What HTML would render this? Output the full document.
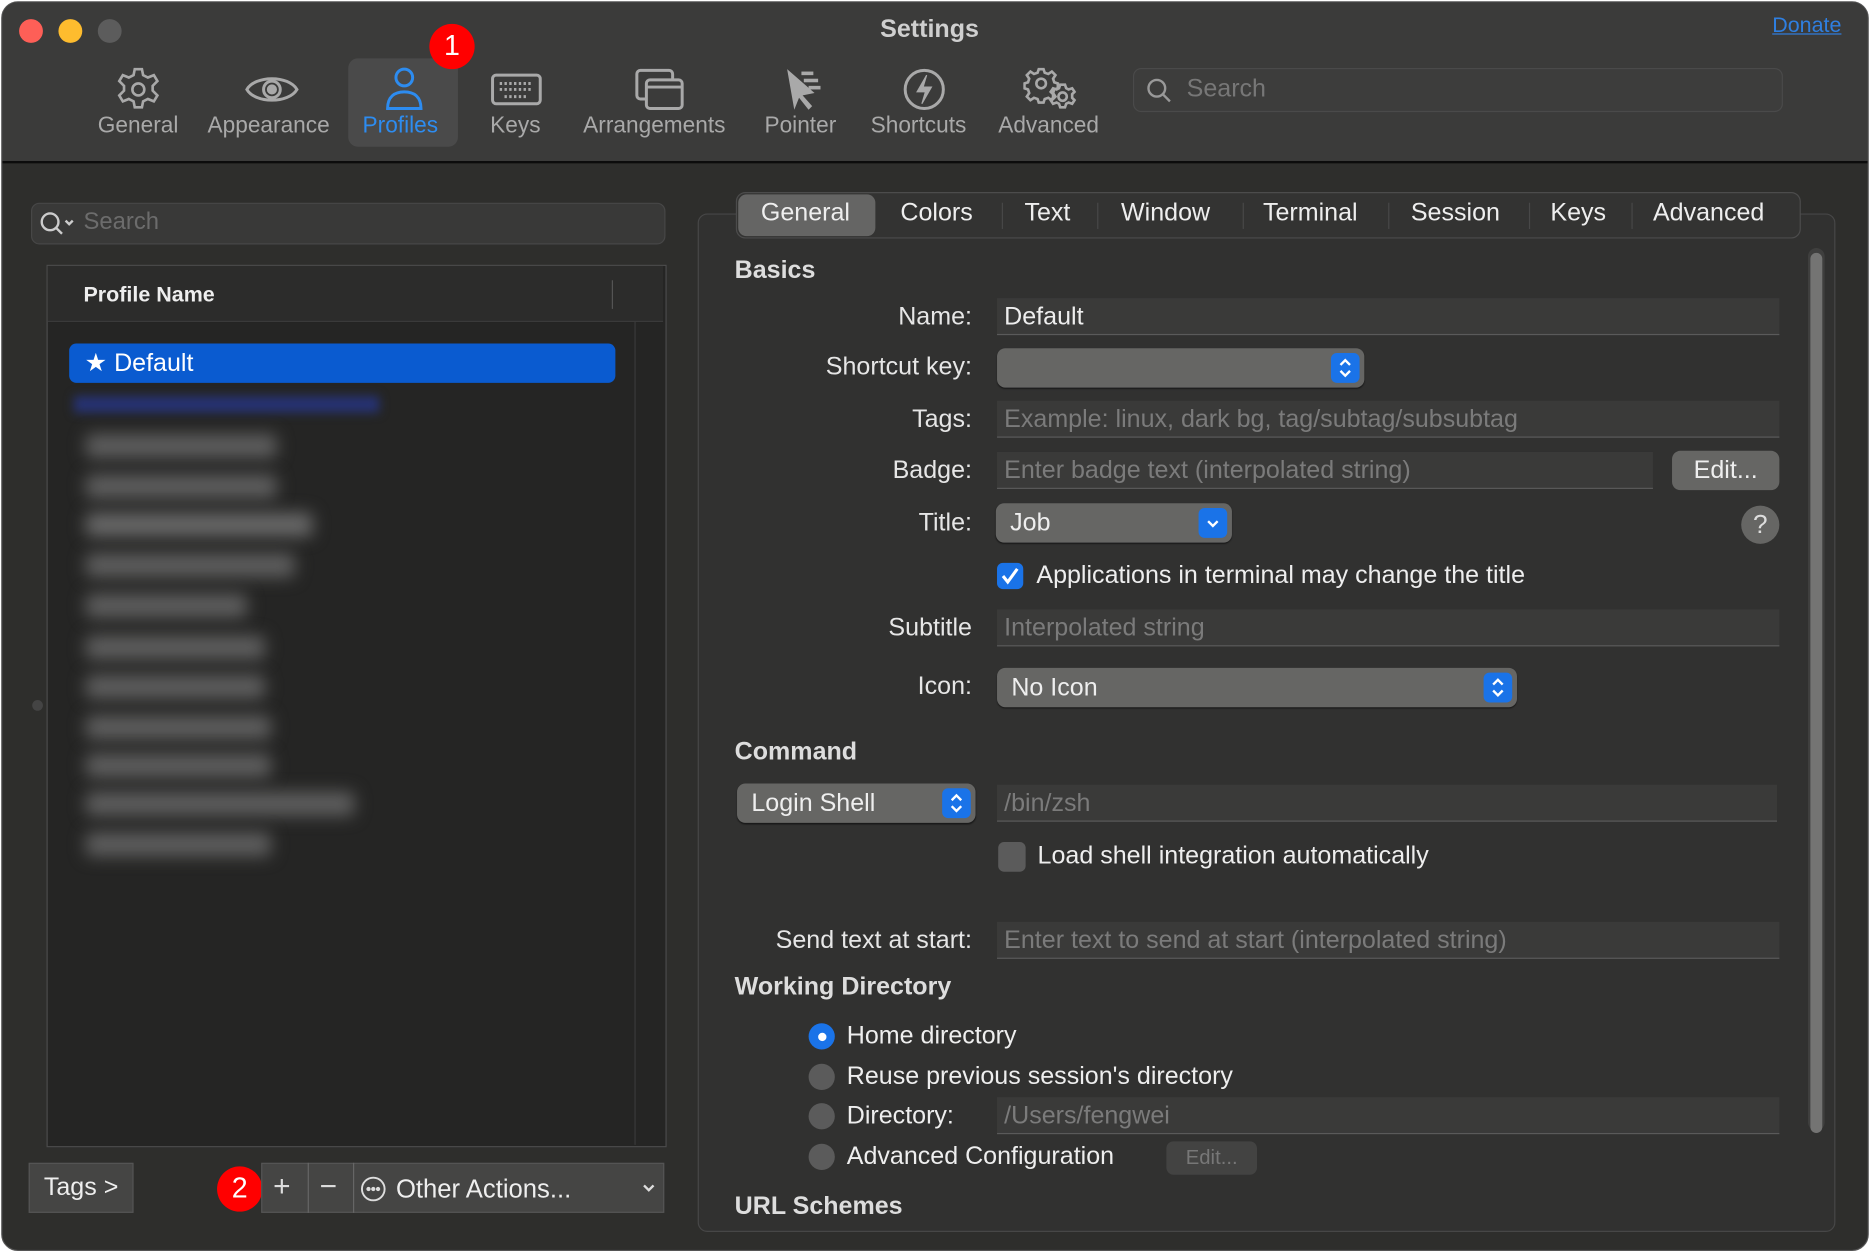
<!DOCTYPE html>
<html><head><meta charset="utf-8"><style>
html,body{margin:0;padding:0;background:#fff;width:1870px;height:1252px;overflow:hidden}
#s{position:absolute;left:0;top:0;width:1568px;height:1050px;transform:scale(1.19260);transform-origin:0 0;font-family:"Liberation Sans",sans-serif;color:#e6e6e6}
.a{position:absolute}
.win{left:1px;top:1px;width:1564px;height:1046px;border-radius:14px;background:#2e2e2c;overflow:hidden;border:1px solid #555}
.tb{left:0;top:0;width:1564px;height:133px;background:#3b3b3a;border-bottom:2px solid #0c0c0c}
.tl{width:20px;height:20px;border-radius:50%;top:14px}
.ti{top:93px;font-size:19px;color:#a9a9a9;text-align:center}
.ic{top:53px}
.lbl{font-size:21px;text-align:right;width:300px;left:513px}
.fld{background:#3a3a39;border-bottom:1px solid #5a5a5a;height:31px;font-size:21px;line-height:32px;padding-left:6px;box-sizing:border-box;color:#7b7b7b}
.pop{background:#666664;border-radius:7px;height:33px;box-shadow:0 1px 1px #1a1a1a;font-size:21px;line-height:33px;padding-left:12px;box-sizing:border-box;color:#eee}
.step{position:absolute;right:4px;top:4px;width:24px;height:25px;background:#1a73e8;border-radius:5px}
.step svg{position:absolute;left:0;top:0}
.h{font-size:21px;font-weight:bold;color:#ddd}
.rad{width:22px;height:22px;border-radius:50%;background:#5b5b5b}
.tab{top:165px;font-size:21px;color:#eee}
.sep{position:absolute;top:168px;width:1px;height:22px;background:#484848}
.blur{position:absolute;background:#5e5e5e;height:20px;filter:blur(7px);border-radius:4px}
.t{font-size:21px;color:#eee}
</style></head><body><div id="s">
<div class="a win">
 <div class="a tb"></div>
 <div class="a tl" style="left:14px;background:#fe5f57"></div>
 <div class="a tl" style="left:47px;background:#febc2e"></div>
 <div class="a tl" style="left:80px;background:#5c5c5c"></div>
 <div class="a" style="left:736px;top:11px;font-size:21px;font-weight:bold;color:#cfcfcf">Settings</div>
 <div class="a" style="left:1484px;top:9px;font-size:18px;color:#2f7fe0;text-decoration:underline">Donate</div>
 <div class="a" style="left:290px;top:47px;width:92px;height:74px;background:#4a4a4a;border-radius:8px"></div>
 <svg class="a ic" style="left:94px" width="40" height="40" viewBox="0 0 40 40" fill="none" stroke="#a9a9a9" stroke-width="2.2"><path d="M17 3h6l1 5 4 2 5-2 3 5-4 4v4l4 4-3 5-5-2-4 2-1 5h-6l-1-5-4-2-5 2-3-5 4-4v-4l-4-4 3-5 5 2 4-2z"/><circle cx="20" cy="20" r="5"/></svg>
 <svg class="a ic" style="left:202px" width="48" height="40" viewBox="0 0 48 40" fill="none" stroke="#a9a9a9" stroke-width="2.5"><path d="M3 20C10 8 38 8 45 20C38 32 10 32 3 20z"/><circle cx="24" cy="20" r="7"/><circle cx="24" cy="20" r="3" fill="#a9a9a9"/></svg>
 <svg class="a ic" style="left:317px" width="40" height="40" viewBox="0 0 40 40" fill="none" stroke="#2d8cf0" stroke-width="2.5"><circle cx="20" cy="10" r="7"/><path d="M6 36c0-10 6-14 14-14s14 4 14 14z"/></svg>
 <svg class="a ic" style="left:409px" width="44" height="40" viewBox="0 0 44 40" fill="none" stroke="#a9a9a9" stroke-width="2.5"><rect x="2" y="8" width="40" height="24" rx="3"/><path d="M8 15h28M8 20h28M12 26h20" stroke-dasharray="2 2"/></svg>
 <svg class="a ic" style="left:530px" width="44" height="40" viewBox="0 0 44 40" fill="none" stroke="#a9a9a9" stroke-width="2.5"><rect x="2" y="4" width="30" height="24" rx="3"/><rect x="10" y="12" width="30" height="24" rx="3" fill="#3b3b3a"/><path d="M10 18h30"/></svg>
 <svg class="a ic" style="left:652px" width="40" height="40" viewBox="0 0 40 40" fill="#a9a9a9"><path d="M6 3l6 34 4-10 8 10 3-3-8-9 10-2z"/><rect x="18" y="5" width="10" height="3"/><rect x="20" y="11" width="12" height="3"/><rect x="24" y="17" width="10" height="3"/></svg>
 <svg class="a ic" style="left:753px" width="40" height="40" viewBox="0 0 40 40" fill="none" stroke="#a9a9a9" stroke-width="2.5"><circle cx="20" cy="20" r="16"/><path d="M22 8l-8 14h7l-3 10 8-14h-7z" fill="#a9a9a9" stroke-width="1"/></svg>
 <svg class="a ic" style="left:856px" width="48" height="40" viewBox="0 0 48 40" fill="none" stroke="#a9a9a9" stroke-width="2.2"><path d="M13 3h4l1 3 3 1 3-2 3 3-2 3 1 3 3 1v4l-3 1-1 3 2 3-3 3-3-2-3 1-1 3h-4l-1-3-3-1-3 2-3-3 2-3-1-3-3-1v-4l3-1 1-3-2-3 3-3 3 2 3-1z"/><circle cx="15" cy="15" r="4"/><path d="M31 16h4l1 3 2 1 3-1 2 3-2 2v3l2 2-2 3-3-1-2 1-1 3h-4l-1-3-2-1-3 1-2-3 2-2v-3l-2-2 2-3 3 1 2-1z"/><circle cx="33" cy="26" r="3.5"/></svg>
 <div class="a ti" style="left:80px">General</div>
 <div class="a ti" style="left:172px">Appearance</div>
 <div class="a ti" style="left:302px;color:#2d8cf0">Profiles</div>
 <div class="a ti" style="left:409px">Keys</div>
 <div class="a ti" style="left:487px">Arrangements</div>
 <div class="a ti" style="left:639px">Pointer</div>
 <div class="a ti" style="left:728px">Shortcuts</div>
 <div class="a ti" style="left:835px">Advanced</div>
 <div class="a" style="left:358px;top:18px;width:38px;height:38px;border-radius:50%;background:#f00;color:#fff;font-size:24px;text-align:center;line-height:38px">1</div>
 <div class="a" style="left:948px;top:55px;width:543px;height:35px;border:1px solid #4a4a4a;border-radius:7px;background:#3d3d3c"></div>
 <svg class="a" style="left:958px;top:62px" width="24" height="24" viewBox="0 0 24 24" fill="none" stroke="#999" stroke-width="2"><circle cx="10" cy="10" r="7"/><path d="M15 15l6 6"/></svg>
 <div class="a" style="left:993px;top:61px;font-size:21px;color:#777">Search</div>

 <div class="a" style="left:24px;top:168px;width:530px;height:33px;border:1px solid #474747;border-radius:7px;background:#393938"></div>
 <svg class="a" style="left:30px;top:174px" width="34" height="24" viewBox="0 0 34 24" fill="none" stroke="#ccc" stroke-width="2"><circle cx="10" cy="10" r="7"/><path d="M15 15l5 5M23 9l3 3 3-3"/></svg>
 <div class="a" style="left:68px;top:173px;font-size:20px;color:#6c6c6c">Search</div>
 <div class="a" style="left:37px;top:220px;width:518px;height:738px;border:1px solid #4c4c4c;background:#252524"></div>
 <div class="a" style="left:38px;top:221px;width:516px;height:46px;background:#2c2c2b;border-bottom:1px solid #3a3a3a"></div>
 <div class="a" style="left:511px;top:233px;width:1px;height:24px;background:#555"></div>
 <div class="a" style="left:530px;top:268px;width:1px;height:690px;background:#3a3a3a"></div>
 <div class="a" style="left:68px;top:235px;font-size:18px;font-weight:bold;color:#eee">Profile Name</div>
 <div class="a" style="left:56px;top:286px;width:458px;height:33px;background:#0a5bd0;border-radius:6px"></div>
 <div class="a" style="left:69px;top:290px;font-size:21px;color:#fff">★ Default</div>
 <div class="a" style="left:60px;top:330px;width:256px;height:14px;background:#263272;filter:blur(4px)"></div>
 <div class="blur" style="left:70px;top:362px;width:160px"></div>
 <div class="blur" style="left:70px;top:396px;width:160px"></div>
 <div class="blur" style="left:70px;top:428px;width:190px;background:#686868"></div>
 <div class="blur" style="left:70px;top:462px;width:175px"></div>
 <div class="blur" style="left:70px;top:496px;width:135px"></div>
 <div class="blur" style="left:70px;top:531px;width:150px"></div>
 <div class="blur" style="left:70px;top:564px;width:150px"></div>
 <div class="blur" style="left:70px;top:598px;width:155px"></div>
 <div class="blur" style="left:70px;top:630px;width:155px"></div>
 <div class="blur" style="left:70px;top:662px;width:225px"></div>
 <div class="blur" style="left:70px;top:696px;width:155px"></div>
 <div class="a" style="left:25px;top:585px;width:9px;height:9px;border-radius:50%;background:#444"></div>
 <div class="a" style="left:22px;top:973px;width:86px;height:40px;background:#454544;border:1px solid #555;font-size:21px;line-height:40px;text-align:center;color:#eee">Tags &gt;</div>
 <div class="a" style="left:180px;top:976px;width:38px;height:38px;border-radius:50%;background:#f00;color:#fff;font-size:24px;text-align:center;line-height:38px">2</div>
 <div class="a" style="left:217px;top:973px;width:336px;height:40px;background:#454544;border:1px solid #555"></div>
 <div class="a" style="left:256px;top:973px;width:1px;height:42px;background:#666"></div>
 <div class="a" style="left:294px;top:973px;width:1px;height:42px;background:#666"></div>
 <div class="a" style="left:227px;top:979px;font-size:25px;color:#ddd">+</div>
 <div class="a" style="left:266px;top:979px;font-size:25px;color:#ddd">−</div>
 <svg class="a" style="left:300px;top:984px" width="22" height="22" viewBox="0 0 22 22" fill="none" stroke="#ddd" stroke-width="1.6"><circle cx="11" cy="11" r="9.5"/><circle cx="7" cy="11" r="1" fill="#ddd"/><circle cx="11" cy="11" r="1" fill="#ddd"/><circle cx="15" cy="11" r="1" fill="#ddd"/></svg>
 <div class="a" style="left:330px;top:983px;font-size:21.5px;color:#eee">Other Actions...</div>
 <svg class="a" style="left:535px;top:988px" width="14" height="12" viewBox="0 0 14 12" fill="none" stroke="#ddd" stroke-width="2"><path d="M3 4l4 4 4-4"/></svg>

 <div class="a" style="left:583px;top:177px;width:952px;height:852px;border:1px solid #474747;border-radius:8px;background:#313130"></div>
 <div class="a" style="left:615px;top:159px;width:891px;height:37px;border:1px solid #4c4c4c;border-radius:8px;background:#333332"></div>
 <div class="a" style="left:617px;top:161px;width:115px;height:35px;border-radius:7px;background:#656564"></div>
 <div class="sep" style="left:838px"></div><div class="sep" style="left:918px"></div><div class="sep" style="left:1040px"></div><div class="sep" style="left:1162px"></div><div class="sep" style="left:1280px"></div><div class="sep" style="left:1366px"></div>
 <div class="a tab" style="left:636px">General</div>
 <div class="a tab" style="left:753px">Colors</div>
 <div class="a tab" style="left:857px">Text</div>
 <div class="a tab" style="left:938px">Window</div>
 <div class="a tab" style="left:1057px">Terminal</div>
 <div class="a tab" style="left:1181px">Session</div>
 <div class="a tab" style="left:1298px">Keys</div>
 <div class="a tab" style="left:1384px">Advanced</div>
 <div class="a" style="left:1514px;top:206px;width:14px;height:740px;border-radius:7px;background:#3f3f3e"></div>
 <div class="a" style="left:1516px;top:210px;width:10px;height:738px;border-radius:5px;background:#747473"></div>

 <div class="a h" style="left:614px;top:213px">Basics</div>
 <div class="a lbl" style="top:252px">Name:</div>
 <div class="a fld" style="left:834px;top:248px;width:656px;color:#eee">Default</div>
 <div class="a lbl" style="top:294px">Shortcut key:</div>
 <div class="a pop" style="left:834px;top:290px;width:308px"><div class="step"><svg width="24" height="25" viewBox="0 0 24 25" fill="none" stroke="#fff" stroke-width="2"><path d="M8 10l4-4 4 4M8 15l4 4 4-4"/></svg></div></div>
 <div class="a lbl" style="top:338px">Tags:</div>
 <div class="a fld" style="left:834px;top:334px;width:656px">Example: linux, dark bg, tag/subtag/subsubtag</div>
 <div class="a lbl" style="top:381px">Badge:</div>
 <div class="a fld" style="left:834px;top:377px;width:550px">Enter badge text (interpolated string)</div>
 <div class="a" style="left:1400px;top:376px;width:90px;height:33px;background:#666664;border-radius:7px;font-size:21px;line-height:33px;text-align:center;color:#eee">Edit...</div>
 <div class="a lbl" style="top:425px">Title:</div>
 <div class="a pop" style="left:833px;top:420px;width:198px">Job<div class="step"><svg width="24" height="25" viewBox="0 0 24 25" fill="none" stroke="#fff" stroke-width="2"><path d="M8 11l4 4 4-4"/></svg></div></div>
 <div class="a" style="left:1458px;top:422px;width:32px;height:32px;border-radius:50%;background:#666664;text-align:center;line-height:32px;font-size:22px;color:#ddd">?</div>
 <div class="a" style="left:834px;top:470px;width:22px;height:22px;border-radius:5px;background:#1a73e8"><svg width="22" height="22" viewBox="0 0 22 22" fill="none" stroke="#fff" stroke-width="2.6"><path d="M5 11l4 5 8-11"/></svg></div>
 <div class="a t" style="left:867px;top:469px">Applications in terminal may change the title</div>
 <div class="a lbl" style="top:513px">Subtitle</div>
 <div class="a fld" style="left:834px;top:509px;width:656px">Interpolated string</div>
 <div class="a lbl" style="top:562px">Icon:</div>
 <div class="a pop" style="left:834px;top:558px;width:436px">No Icon<div class="step"><svg width="24" height="25" viewBox="0 0 24 25" fill="none" stroke="#fff" stroke-width="2"><path d="M8 10l4-4 4 4M8 15l4 4 4-4"/></svg></div></div>

 <div class="a h" style="left:614px;top:617px">Command</div>
 <div class="a pop" style="left:616px;top:655px;width:200px">Login Shell<div class="step"><svg width="24" height="25" viewBox="0 0 24 25" fill="none" stroke="#fff" stroke-width="2"><path d="M8 10l4-4 4 4M8 15l4 4 4-4"/></svg></div></div>
 <div class="a fld" style="left:834px;top:656px;width:654px">/bin/zsh</div>
 <div class="a" style="left:835px;top:704px;width:23px;height:25px;border-radius:5px;background:#5b5b5b"></div>
 <div class="a t" style="left:868px;top:704px">Load shell integration automatically</div>
 <div class="a lbl" style="top:775px">Send text at start:</div>
 <div class="a fld" style="left:834px;top:771px;width:656px">Enter text to send at start (interpolated string)</div>
 <div class="a h" style="left:614px;top:814px">Working Directory</div>
 <div class="a rad" style="left:676px;top:856px;background:#1a73e8"></div>
 <div class="a" style="left:684px;top:864px;width:7px;height:7px;border-radius:50%;background:#fff"></div>
 <div class="a t" style="left:708px;top:855px">Home directory</div>
 <div class="a rad" style="left:676px;top:890px"></div>
 <div class="a t" style="left:708px;top:889px">Reuse previous session's directory</div>
 <div class="a rad" style="left:676px;top:923px"></div>
 <div class="a t" style="left:708px;top:922px">Directory:</div>
 <div class="a fld" style="left:834px;top:918px;width:656px">/Users/fengwei</div>
 <div class="a rad" style="left:676px;top:957px"></div>
 <div class="a t" style="left:708px;top:956px">Advanced Configuration</div>
 <div class="a" style="left:976px;top:955px;width:76px;height:28px;border-radius:6px;background:#434342;font-size:17px;line-height:28px;text-align:center;color:#777">Edit...</div>
 <div class="a h" style="left:614px;top:998px">URL Schemes</div>
</div>
</div></body></html>
